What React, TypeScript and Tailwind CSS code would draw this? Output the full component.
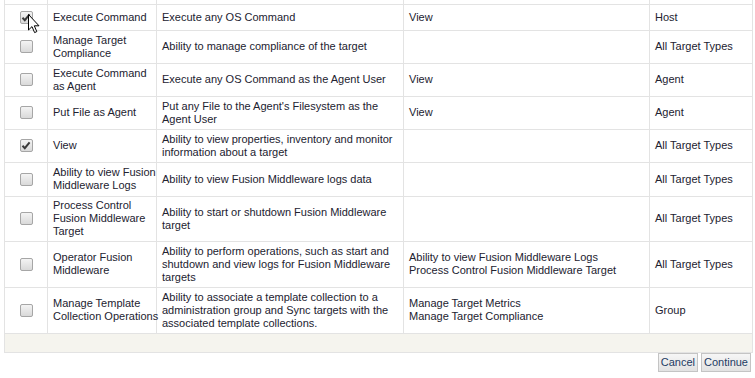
import React from "react";

type Row = {
  h: number;
  checked: boolean;
  name: string[];
  desc: string[];
  incl: string[];
  type: string;
};

const rows: Row[] = [
  { h: 26, checked: true, name: ["Execute Command"], desc: ["Execute any OS Command"], incl: ["View"], type: "Host" },
  { h: 33, checked: false, name: ["Manage Target", "Compliance"], desc: ["Ability to manage compliance of the target"], incl: [], type: "All Target Types" },
  { h: 33, checked: false, name: ["Execute Command", "as Agent"], desc: ["Execute any OS Command as the Agent User"], incl: ["View"], type: "Agent" },
  { h: 33, checked: false, name: ["Put File as Agent"], desc: ["Put any File to the Agent's Filesystem as the", "Agent User"], incl: ["View"], type: "Agent" },
  { h: 33, checked: true, name: ["View"], desc: ["Ability to view properties, inventory and monitor", "information about a target"], incl: [], type: "All Target Types" },
  { h: 34, checked: false, name: ["Ability to view Fusion", "Middleware Logs"], desc: ["Ability to view Fusion Middleware logs data"], incl: [], type: "All Target Types" },
  { h: 45, checked: false, name: ["Process Control", "Fusion Middleware", "Target"], desc: ["Ability to start or shutdown Fusion Middleware", "target"], incl: [], type: "All Target Types" },
  { h: 46, checked: false, name: ["Operator Fusion", "Middleware"], desc: ["Ability to perform operations, such as start and", "shutdown and view logs for Fusion Middleware", "targets"], incl: ["Ability to view Fusion Middleware Logs", "Process Control Fusion Middleware Target"], type: "All Target Types" },
  { h: 46, checked: false, name: ["Manage Template", "Collection Operations"], desc: ["Ability to associate a template collection to a", "administration group and Sync targets with the", "associated template collections."], incl: ["Manage Target Metrics", "Manage Target Compliance"], type: "Group" },
];

function Lines({ lines }: { lines: string[] }) {
  return (
    <>
      {lines.map((l, i) => (
        <div key={i} className="whitespace-nowrap">
          {l}
        </div>
      ))}
    </>
  );
}

function Check({ checked }: { checked: boolean }) {
  return (
    <div className="mx-auto flex h-[13px] w-[13px] items-center justify-center rounded-[2px] border border-[#a6a6a6] bg-gradient-to-b from-[#f4f4f4] to-[#d9d9d9]">
      {checked && (
        <svg width="10" height="9" viewBox="0 0 10 9">
          <path d="M1.5 4.8 L3.8 7.2 L8.6 1.4" fill="none" stroke="#3a3a3a" strokeWidth="2" />
        </svg>
      )}
    </div>
  );
}

export default function App() {
  const td = "border border-[#e3e3e3] px-[5px] align-middle";
  return (
    <div
      className="relative h-[378px] w-[755px] overflow-hidden bg-white text-[11px] leading-[13px] text-[#222230]"
      style={{ fontFamily: "'Liberation Sans', Arial, sans-serif" }}
    >
      <div className="-mt-[2px] pl-[4px]">
        <table className="w-[748px] table-fixed border-collapse">
          <colgroup>
            <col className="w-[43px]" />
            <col className="w-[109px]" />
            <col className="w-[247px]" />
            <col className="w-[246px]" />
            <col className="w-[103px]" />
          </colgroup>
          <tbody>
            <tr className="h-[6px]">
              <td className="border-x border-b border-[#e3e3e3]"></td>
              <td className="border-x border-b border-[#e3e3e3]"></td>
              <td className="border-x border-b border-[#e3e3e3]"></td>
              <td className="border-x border-b border-[#e3e3e3]"></td>
              <td className="border-x border-b border-[#e3e3e3]"></td>
            </tr>
            {rows.map((r, i) => (
              <tr key={i} style={{ height: r.h }}>
                <td className="border border-[#e3e3e3] align-middle">
                  <Check checked={r.checked} />
                </td>
                <td className={td}>
                  <Lines lines={r.name} />
                </td>
                <td className={td}>
                  <Lines lines={r.desc} />
                </td>
                <td className={td}>
                  <Lines lines={r.incl} />
                </td>
                <td className={td}>{r.type}</td>
              </tr>
            ))}
            <tr className="h-[19px]">
              <td colSpan={5} className="border border-[#e3e3e3] bg-[#f5f4ee]"></td>
            </tr>
          </tbody>
        </table>
        <div className="flex w-[748px] justify-end gap-[3px] pr-px">
          <button className="h-[19px] border border-[#c4c4c4] bg-gradient-to-b from-[#f6f6f6] to-[#e2e2e2] px-[2px] text-[11px] leading-[17px] text-[#1d3b63]">
            Cancel
          </button>
          <button className="h-[19px] border border-[#c4c4c4] bg-gradient-to-b from-[#f6f6f6] to-[#e2e2e2] px-[2px] text-[11px] leading-[17px] text-[#1d3b63]">
            Continue
          </button>
        </div>
      </div>
      <svg className="absolute left-[28px] top-[14px]" width="13" height="20" viewBox="0 0 13 20">
        <path
          d="M0.5 0.5 L0.5 16 L4 12.6 L6.6 18.6 L8.8 17.6 L6.3 11.8 L11 11.8 Z"
          fill="#fff"
          stroke="#000"
          strokeWidth="1"
          strokeLinejoin="miter"
        />
      </svg>
    </div>
  );
}
